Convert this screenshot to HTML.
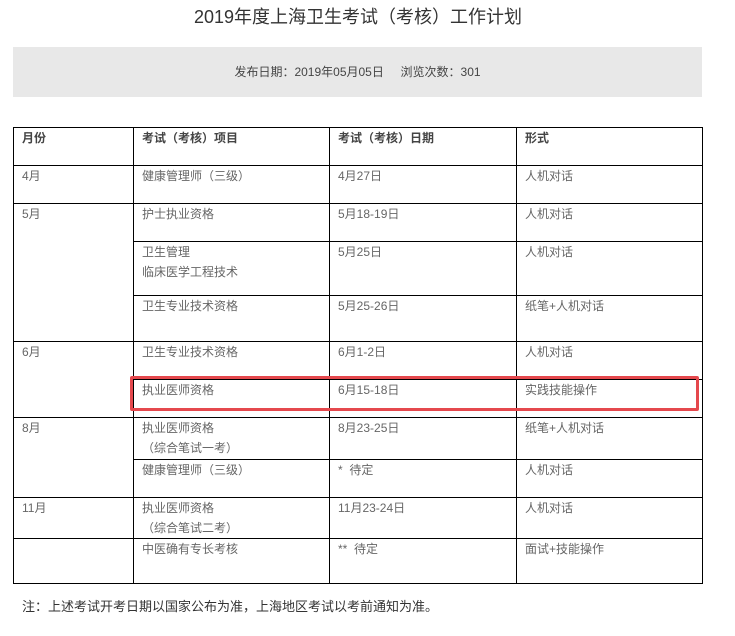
<!DOCTYPE html>
<html><head><meta charset="utf-8"><style>
*{margin:0;padding:0;box-sizing:border-box}
body{width:735px;height:636px;background:#fff;font-family:"Liberation Sans","Noto Sans CJK SC",sans-serif;color:#555;position:relative;overflow:hidden}
.title{position:absolute;top:5px;left:0;width:716px;text-align:center;font-size:18px;color:#333;line-height:24px}
.meta{position:absolute;left:13px;top:47px;width:689px;height:50px;background:#e8e8e8;text-align:center;font-size:12px;line-height:50px;color:#444}
table{position:absolute;left:13px;top:127px;border-collapse:collapse;width:689px;table-layout:fixed;font-size:12px}
td{border:1px solid #000;vertical-align:top;padding:0 8px 0;line-height:20px;color:#666}
tr.h td{font-weight:bold;color:#444}
.red{position:absolute;left:130px;top:376px;width:569px;height:35px;border:3px solid #e5484d;border-radius:2px}
.note{position:absolute;left:22px;top:597px;font-size:13px;color:#333;line-height:20px}
</style></head><body>
<div class="title">2019年度上海卫生考试（考核）工作计划</div>
<div class="meta">发布日期：2019年05月05日&nbsp;&nbsp;&nbsp;&nbsp;&nbsp;浏览次数：301</div>
<table>
<colgroup><col style="width:120px"><col style="width:196px"><col style="width:187px"><col style="width:186px"></colgroup>
<tr class="h" style="height:38px"><td>月份</td><td>考试（考核）项目</td><td>考试（考核）日期</td><td>形式</td></tr>
<tr style="height:38px"><td>4月</td><td>健康管理师（三级）</td><td>4月27日</td><td>人机对话</td></tr>
<tr style="height:38px"><td rowspan="3">5月</td><td>护士执业资格</td><td>5月18-19日</td><td>人机对话</td></tr>
<tr style="height:54px"><td>卫生管理<br>临床医学工程技术</td><td>5月25日</td><td>人机对话</td></tr>
<tr style="height:46px"><td>卫生专业技术资格</td><td>5月25-26日</td><td>纸笔+人机对话</td></tr>
<tr style="height:38px"><td rowspan="2">6月</td><td>卫生专业技术资格</td><td>6月1-2日</td><td>人机对话</td></tr>
<tr style="height:38px"><td>执业医师资格</td><td>6月15-18日</td><td>实践技能操作</td></tr>
<tr style="height:42px"><td rowspan="2">8月</td><td>执业医师资格<br>（综合笔试一考）</td><td>8月23-25日</td><td>纸笔+人机对话</td></tr>
<tr style="height:38px"><td>健康管理师（三级）</td><td>*&nbsp; 待定</td><td>人机对话</td></tr>
<tr style="height:41px"><td>11月</td><td>执业医师资格<br>（综合笔试二考）</td><td>11月23-24日</td><td>人机对话</td></tr>
<tr style="height:45px"><td></td><td>中医确有专长考核</td><td>**&nbsp; 待定</td><td>面试+技能操作</td></tr>
</table>
<div class="red"></div>
<div class="note">注：上述考试开考日期以国家公布为准，上海地区考试以考前通知为准。</div>
</body></html>
